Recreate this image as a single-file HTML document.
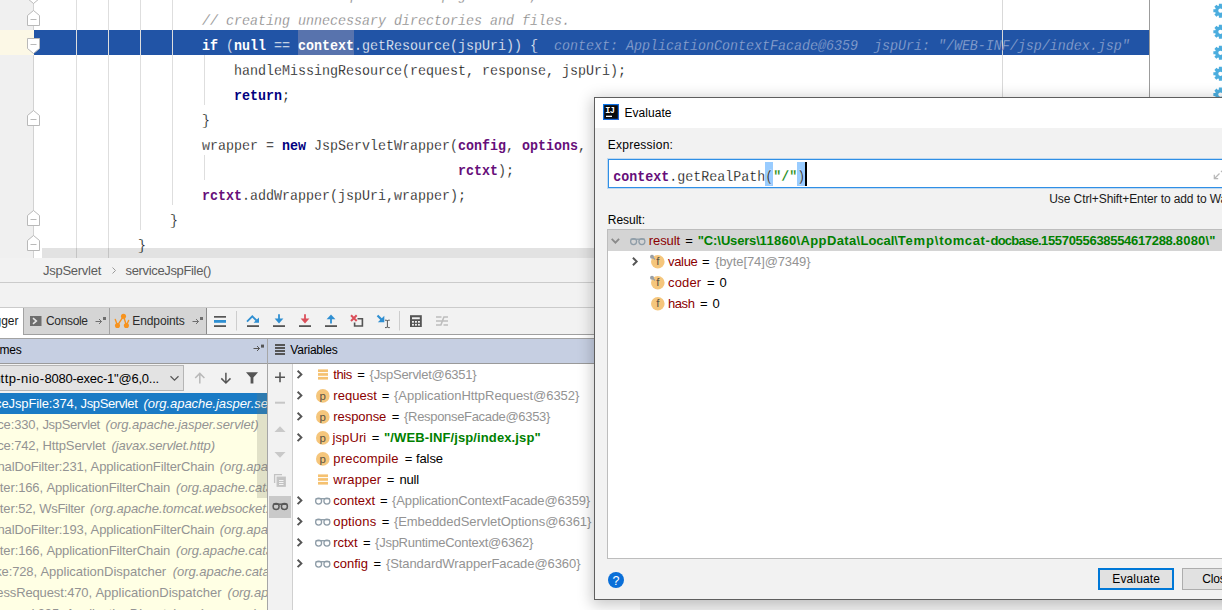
<!DOCTYPE html>
<html><head><meta charset="utf-8"><title>Evaluate</title>
<style>
html,body{margin:0;padding:0;}
body{width:1222px;height:610px;overflow:hidden;position:relative;background:#f2f2f2;font-family:"Liberation Sans",sans-serif;font-size:13px;color:#000;}
.abs{position:absolute;}
svg{position:absolute;overflow:visible;}
.t{position:absolute;white-space:pre;line-height:16px;height:16px;}
#editor{position:absolute;left:0;top:0;width:1150px;height:258px;background:#fff;overflow:hidden;}
#gutter{position:absolute;left:0;top:0;width:33px;height:258px;background:#f0f0f0;border-right:1px solid #d2d2d2;}
.ig{position:absolute;width:1px;background:#dedede;}
.cl{position:absolute;transform:scale(1,1.14);transform-origin:0 0;margin-top:2px;height:25px;line-height:25px;white-space:pre;font-family:"Liberation Mono",monospace;font-size:13.33px;color:#000;}
.cl{-webkit-text-stroke:0.22px #fff;}
.kw,.fld{-webkit-text-stroke:0 transparent;}
.hl{-webkit-text-stroke-color:#2154a6;}
.kw{color:#000080;font-weight:bold;}
.fld{color:#660e7a;font-weight:bold;}
.cm{color:#808080;font-style:italic;}
.u{text-decoration:underline;}
.hl .kw,.hl .fld{color:#fff;}.hl{color:#fbfcfe;}
.clip{position:absolute;overflow:hidden;}
</style></head><body>

<!-- ================= EDITOR ================= -->
<div id="editor">
  <div id="gutter"></div>
  <div class="abs" style="left:0;top:30px;width:34px;height:25px;background:#fcf8e6;"></div>
  <div class="abs" style="left:34px;top:30px;width:1115px;height:25px;background:#2154a6;"></div>
  <div class="abs" style="left:298px;top:30px;width:56px;height:25px;background:#5873ad;"></div>
  <div class="ig" style="left:76px;top:0;height:258px;"></div>
  <div class="ig" style="left:108px;top:0;height:258px;"></div>
  <div class="ig" style="left:140px;top:0;height:230px;"></div>
  <div class="ig" style="left:172px;top:0;height:205px;"></div>
  <div class="ig" style="left:204px;top:55px;height:50px;"></div>
  <div class="ig" style="left:204px;top:155px;height:25px;"></div>
  <div class="ig" style="left:1002px;top:0;height:258px;background:#d9d9d9;"></div>
  <div class="cl cm" style="left:202px;top:-20px;">// Check if the requested JSP page exists, to avoid</div>
  <div class="cl cm" style="left:202px;top:5px;">// creating unnecessary directories and files.</div>
  <div class="cl hl" style="left:202px;top:30px;"><span class="kw">if</span> (<span class="kw">null</span> == <span class="fld">context</span>.getResource(jspUri)) {  <span style="font-style:italic;color:#93a8d3;">context: ApplicationContextFacade@6359  jspUri: "/WEB-INF/jsp/index.jsp"</span></div>
  <div class="cl" style="left:234px;top:55px;">handleMissingResource(request, response, jspUri);</div>
  <div class="cl" style="left:234px;top:80px;"><span class="kw">return</span>;</div>
  <div class="cl" style="left:202px;top:105px;">}</div>
  <div class="cl" style="left:202px;top:130px;"><span class="u">wrapper</span> = <span class="kw">new</span> JspServletWrapper(<span class="fld">config</span>, <span class="fld">options</span>,</div>
  <div class="cl" style="left:458px;top:155px;"><span class="fld">rctxt</span>);</div>
  <div class="cl" style="left:202px;top:180px;"><span class="fld">rctxt</span>.addWrapper(jspUri,<span class="u">wrapper</span>);</div>
  <div class="cl" style="left:170px;top:205px;">}</div>
  <div class="cl" style="left:138px;top:230px;">}</div>
  <svg style="left:0;top:0;" width="60" height="258" fill="#fff" stroke="#b9b9b9" stroke-width="1"><path d="M27.5 -11.5H39.5V-1.5L33.5 3.5L27.5 -1.5Z"/><path d="M30.5 -5.5H36.5"/><path d="M27.5 15.5L33.5 10.5L39.5 15.5V25.5H27.5Z"/><path d="M30.5 19.5H36.5"/><path d="M27.5 38.5H39.5V48.5L33.5 53.5L27.5 48.5Z"/><path d="M30.5 44.5H36.5"/><path d="M27.5 115.5L33.5 110.5L39.5 115.5V125.5H27.5Z"/><path d="M30.5 119.5H36.5"/><path d="M27.5 215.5L33.5 210.5L39.5 215.5V225.5H27.5Z"/><path d="M30.5 219.5H36.5"/><path d="M27.5 240.5L33.5 235.5L39.5 240.5V250.5H27.5Z"/><path d="M30.5 244.5H36.5"/></svg>
  <div class="abs" style="left:42px;top:248px;width:1108px;height:10.5px;background:rgba(0,0,0,.115);"></div>
</div>
<div class="abs" style="left:1149px;top:0;width:1px;height:97px;background:#9c9c9c;"></div>
<div class="abs" style="left:1150px;top:0;width:72px;height:97px;background:#fff;"></div>
<svg style="left:0;top:0;" width="1222" height="98"><path d="M1227.44 9.20L1227.44 12.20L1225.46 12.27L1225.09 13.17L1226.44 14.62L1224.32 16.74L1222.87 15.39L1221.97 15.76L1221.90 17.74L1218.90 17.74L1218.83 15.76L1217.93 15.39L1216.48 16.74L1214.36 14.62L1215.71 13.17L1215.34 12.27L1213.36 12.20L1213.36 9.20L1215.34 9.13L1215.71 8.23L1214.36 6.78L1216.48 4.66L1217.93 6.01L1218.83 5.64L1218.90 3.66L1221.90 3.66L1221.97 5.64L1222.87 6.01L1224.32 4.66L1226.44 6.78L1225.09 8.23L1225.46 9.13Z" fill="#4badde"/><circle cx="1220.4" cy="10.7" r="2.1" fill="#fff"/><path d="M1227.44 30.30L1227.44 33.30L1225.46 33.37L1225.09 34.27L1226.44 35.72L1224.32 37.84L1222.87 36.49L1221.97 36.86L1221.90 38.84L1218.90 38.84L1218.83 36.86L1217.93 36.49L1216.48 37.84L1214.36 35.72L1215.71 34.27L1215.34 33.37L1213.36 33.30L1213.36 30.30L1215.34 30.23L1215.71 29.33L1214.36 27.88L1216.48 25.76L1217.93 27.11L1218.83 26.74L1218.90 24.76L1221.90 24.76L1221.97 26.74L1222.87 27.11L1224.32 25.76L1226.44 27.88L1225.09 29.33L1225.46 30.23Z" fill="#4badde"/><circle cx="1220.4" cy="31.8" r="2.1" fill="#fff"/><path d="M1227.44 51.30L1227.44 54.30L1225.46 54.37L1225.09 55.27L1226.44 56.72L1224.32 58.84L1222.87 57.49L1221.97 57.86L1221.90 59.84L1218.90 59.84L1218.83 57.86L1217.93 57.49L1216.48 58.84L1214.36 56.72L1215.71 55.27L1215.34 54.37L1213.36 54.30L1213.36 51.30L1215.34 51.23L1215.71 50.33L1214.36 48.88L1216.48 46.76L1217.93 48.11L1218.83 47.74L1218.90 45.76L1221.90 45.76L1221.97 47.74L1222.87 48.11L1224.32 46.76L1226.44 48.88L1225.09 50.33L1225.46 51.23Z" fill="#4badde"/><circle cx="1220.4" cy="52.8" r="2.1" fill="#fff"/><path d="M1227.44 72.30L1227.44 75.30L1225.46 75.37L1225.09 76.27L1226.44 77.72L1224.32 79.84L1222.87 78.49L1221.97 78.86L1221.90 80.84L1218.90 80.84L1218.83 78.86L1217.93 78.49L1216.48 79.84L1214.36 77.72L1215.71 76.27L1215.34 75.37L1213.36 75.30L1213.36 72.30L1215.34 72.23L1215.71 71.33L1214.36 69.88L1216.48 67.76L1217.93 69.11L1218.83 68.74L1218.90 66.76L1221.90 66.76L1221.97 68.74L1222.87 69.11L1224.32 67.76L1226.44 69.88L1225.09 71.33L1225.46 72.23Z" fill="#4badde"/><circle cx="1220.4" cy="73.8" r="2.1" fill="#fff"/><path d="M1227.44 93.10L1227.44 96.10L1225.46 96.17L1225.09 97.07L1226.44 98.52L1224.32 100.64L1222.87 99.29L1221.97 99.66L1221.90 101.64L1218.90 101.64L1218.83 99.66L1217.93 99.29L1216.48 100.64L1214.36 98.52L1215.71 97.07L1215.34 96.17L1213.36 96.10L1213.36 93.10L1215.34 93.03L1215.71 92.13L1214.36 90.68L1216.48 88.56L1217.93 89.91L1218.83 89.54L1218.90 87.56L1221.90 87.56L1221.97 89.54L1222.87 89.91L1224.32 88.56L1226.44 90.68L1225.09 92.13L1225.46 93.03Z" fill="#4badde"/><circle cx="1220.4" cy="94.6" r="2.1" fill="#fff"/></svg>
<!-- breadcrumbs -->
<div class="abs" style="left:0;top:258.5px;width:1222px;height:23.5px;background:#f2f2f2;border-bottom:1px solid #cbcbcb;"></div>
<svg style="left:0;top:0;" width="200" height="300"><path d="M112.5 267.5L115.5 270.5L112.5 273.5" fill="none" stroke="#9a9a9a" stroke-width="1"/></svg>

<!-- ================= DEBUG TOOLWINDOW ================= -->
<div class="abs" style="left:0;top:307px;width:640px;height:1px;background:#cbcbcb;"></div>
<div class="abs" style="left:0;top:308px;width:23px;height:27px;background:#fff;"></div>
<div class="abs" style="left:23px;top:308px;width:182px;height:26px;background:#d5d5d5;border-left:1px solid #a3a3a3;border-right:1px solid #8c8c8c;"></div>
<div class="abs" style="left:109px;top:308px;width:1px;height:26px;background:#a3a3a3;"></div>
<div class="abs" style="left:23px;top:334px;width:617px;height:1px;background:#a0a0a0;"></div>
<div class="abs" style="left:0;top:335px;width:640px;height:3px;background:#fff;"></div>
<svg style="left:0;top:0;" width="600" height="340">
  <rect x="30" y="316" width="11.5" height="10" fill="#6e6e6e"/>
  <path d="M33 318.2L36.3 321L33 323.8" fill="none" stroke="#e6e6e6" stroke-width="1.6"/>
  <g fill="none" stroke="#6e6e6e" stroke-width="1">
   <path d="M95.5 321.5H101.5M99 319L101.5 321.5L99 324"/>
   <path d="M192.5 321.5H198.5M196 319L198.5 321.5L196 324"/>
  </g>
  <rect x="103" y="317" width="3" height="3" fill="#6e6e6e"/>
  <rect x="200" y="317" width="3" height="3" fill="#6e6e6e"/>
  <g stroke="#f7931e" stroke-width="1.4" fill="none" stroke-linecap="round"><path d="M115.3 319.4L117.5 325.5L123.5 316.2L126.4 325.5L128.6 320.5"/></g>
  <circle cx="123.5" cy="316.2" r="2.55" fill="#f7931e"/><circle cx="117.5" cy="325.5" r="2.55" fill="#f7931e"/><circle cx="126.4" cy="325.5" r="2.55" fill="#f7931e"/>
  <rect x="214" y="316" width="12" height="1.7" fill="#555"/><rect x="214" y="320" width="12" height="2.8" fill="#2f8fd2"/><rect x="214" y="325.2" width="12" height="1.8" fill="#555"/>
  <rect x="236" y="311" width="1" height="19.5" fill="#cdcdcd"/>
  <rect x="399" y="311" width="1" height="19.5" fill="#cdcdcd"/>
  <rect x="247" y="325.2" width="12" height="1.8" fill="#555"/>
  <path d="M247 321.6L252.3 316.3L256.5 320.5" fill="none" stroke="#2f8fd2" stroke-width="1.8"/>
  <path d="M259 317.4V322.7H253.6Z" fill="#2f8fd2"/>
  <rect x="273" y="325.2" width="12" height="1.8" fill="#555"/>
  <path d="M279 314.2V320" stroke="#2f8fd2" stroke-width="1.8"/><path d="M274.6 318.6H283.4L279 323.4Z" fill="#2f8fd2"/>
  <rect x="299" y="325.2" width="12" height="1.8" fill="#555"/>
  <path d="M305 314.2V320" stroke="#db4f5a" stroke-width="1.8"/><path d="M300.6 318.6H309.4L305 323.4Z" fill="#db4f5a"/>
  <rect x="325" y="325.2" width="12" height="1.8" fill="#555"/>
  <path d="M331 323.4V318" stroke="#2f8fd2" stroke-width="1.8"/><path d="M326.6 319.2H335.4L331 314.4Z" fill="#2f8fd2"/>
  <path d="M351 315.3L356.7 321M356.7 315.3L351 321" stroke="#db4f5a" stroke-width="2"/>
  <path d="M357.5 318.8H362.4V326H354.6V322.4" fill="none" stroke="#555" stroke-width="1.6"/>
  <path d="M377.5 315.5L382.5 320.5" stroke="#2f8fd2" stroke-width="2.2"/><path d="M384.3 315.8V322.3H377.8Z" fill="#2f8fd2"/>
  <path d="M387.4 320.4V327.4M385 320.2H386.6L387.4 321L388.2 320.2H389.8M385 327.6H386.6L387.4 326.8L388.2 327.6H389.8" fill="none" stroke="#444" stroke-width="0.9"/>
  <rect x="410" y="315.2" width="11.8" height="11.8" fill="#555"/>
  <rect x="412" y="317.3" width="7.8" height="1.9" fill="#f2f2f2"/>
  <g fill="#f2f2f2"><rect x="412" y="321" width="1.9" height="1.7"/><rect x="415" y="321" width="1.9" height="1.7"/><rect x="418" y="321" width="1.9" height="1.7"/><rect x="412" y="323.9" width="1.9" height="1.7"/><rect x="415" y="323.9" width="1.9" height="1.7"/><rect x="418" y="323.9" width="1.9" height="1.7"/></g>
  <g stroke="#bdbdbd" stroke-width="1.6" fill="none"><path d="M436 317H441.5M443.5 317H448M436 321H448M436 325H441.5M443.5 325H448M440.8 325.3L444 316.8"/></g>
</svg>
<div class="abs" style="left:0;top:338px;width:640px;height:1px;background:#a2a2a2;"></div>
<div class="abs" style="left:0;top:339px;width:640px;height:24px;background:#c6cfe2;"></div>
<div class="abs" style="left:0;top:363px;width:640px;height:1px;background:#9a9a9a;"></div>

<div class="abs" style="left:0;top:364px;width:267px;height:29px;background:#f2f2f2;"></div>
<div class="abs" style="left:-2px;top:365px;width:184px;height:24px;background:#e3e3e3;border:1px solid #b5b5b5;"></div>
<div class="abs" style="left:0;top:393px;width:267px;height:217px;background:#ffffe4;"></div>
<div class="abs" style="left:0;top:393px;width:267px;height:21px;background:#1a7bc5;"></div>
<svg style="left:0;top:0;" width="600" height="610">
  <path d="M170.5 376.3L174.5 380.2L178.5 376.3" fill="none" stroke="#555" stroke-width="1.2"/>
  <g fill="none" stroke="#b9b9b9" stroke-width="1.5"><path d="M199.8 383.6V373.6M195.2 378L199.8 373.4L204.4 378"/></g>
  <g fill="none" stroke="#555" stroke-width="1.5"><path d="M225.9 372.8V382.8M221.3 378.4L225.9 383L230.5 378.4"/></g>
  <path d="M246 372.2H258L253.4 377.6V383.4H250.6V377.6Z" fill="#555"/>
  <path d="M253.5 348.5H259.5M257 346L259.5 348.5L257 351" fill="none" stroke="#555" stroke-width="1"/><rect x="261" y="344.6" width="3" height="3" fill="#555"/>
  <g fill="#555"><rect x="275" y="344" width="10" height="2"/><rect x="275" y="347" width="10" height="2"/><rect x="275" y="350" width="10" height="2"/><rect x="275" y="353" width="10" height="2"/></g>
</svg>

<div class="abs" style="left:268px;top:364px;width:24px;height:246px;background:#f2f2f2;border-right:1px solid #d0d0d0;"></div>
<div class="abs" style="left:293px;top:364px;width:347px;height:246px;background:#fff;"></div>
<div class="abs" style="left:269px;top:495.5px;width:22px;height:22px;background:#c9c9c9;"></div>
<svg style="left:0;top:0;" width="600" height="610"><path d="M297.6 370.7L301.40000000000003 374.4L297.6 378.09999999999997" fill="none" stroke="#555" stroke-width="1.9"/><rect x="318" y="369.4" width="10" height="2.7" fill="#f5c170"/><rect x="318" y="373.1" width="10" height="2.7" fill="#f5c170"/><rect x="318" y="376.9" width="10" height="2.7" fill="#f5c170"/><path d="M297.6 391.7L301.40000000000003 395.4L297.6 399.09999999999997" fill="none" stroke="#555" stroke-width="1.9"/><circle cx="322.8" cy="395.9" r="6.8" fill="#f5c67c"/><text x="322.8" y="399.5" text-anchor="middle" font-family="Liberation Sans,sans-serif" font-size="11.5" fill="#5a5244">p</text><path d="M297.6 412.7L301.40000000000003 416.4L297.6 420.09999999999997" fill="none" stroke="#555" stroke-width="1.9"/><circle cx="322.8" cy="416.9" r="6.8" fill="#f5c67c"/><text x="322.8" y="420.5" text-anchor="middle" font-family="Liberation Sans,sans-serif" font-size="11.5" fill="#5a5244">p</text><path d="M297.6 433.7L301.40000000000003 437.4L297.6 441.09999999999997" fill="none" stroke="#555" stroke-width="1.9"/><circle cx="322.8" cy="437.9" r="6.8" fill="#f5c67c"/><text x="322.8" y="441.5" text-anchor="middle" font-family="Liberation Sans,sans-serif" font-size="11.5" fill="#5a5244">p</text><circle cx="322.8" cy="458.9" r="6.8" fill="#f5c67c"/><text x="322.8" y="462.5" text-anchor="middle" font-family="Liberation Sans,sans-serif" font-size="11.5" fill="#5a5244">p</text><rect x="318" y="474.4" width="10" height="2.7" fill="#f5c170"/><rect x="318" y="478.1" width="10" height="2.7" fill="#f5c170"/><rect x="318" y="481.9" width="10" height="2.7" fill="#f5c170"/><path d="M297.6 496.7L301.40000000000003 500.4L297.6 504.09999999999997" fill="none" stroke="#555" stroke-width="1.9"/><g fill="none" stroke="#8f9da8" stroke-width="1.3"><circle cx="318.6" cy="501.1" r="3"/><circle cx="326.9" cy="501.1" r="3"/><path d="M315.6 498.7H329.9"/></g><path d="M297.6 517.6999999999999L301.40000000000003 521.4L297.6 525.1" fill="none" stroke="#555" stroke-width="1.9"/><g fill="none" stroke="#8f9da8" stroke-width="1.3"><circle cx="318.6" cy="522.1" r="3"/><circle cx="326.9" cy="522.1" r="3"/><path d="M315.6 519.7H329.9"/></g><path d="M297.6 538.6999999999999L301.40000000000003 542.4L297.6 546.1" fill="none" stroke="#555" stroke-width="1.9"/><g fill="none" stroke="#8f9da8" stroke-width="1.3"><circle cx="318.6" cy="543.1" r="3"/><circle cx="326.9" cy="543.1" r="3"/><path d="M315.6 540.7H329.9"/></g><path d="M297.6 559.6999999999999L301.40000000000003 563.4L297.6 567.1" fill="none" stroke="#555" stroke-width="1.9"/><g fill="none" stroke="#8f9da8" stroke-width="1.3"><circle cx="318.6" cy="564.1" r="3"/><circle cx="326.9" cy="564.1" r="3"/><path d="M315.6 561.7H329.9"/></g><path d="M275 377.2H285M280 372.2V382.2" stroke="#555" stroke-width="1.6"/><path d="M275 402.7H285" stroke="#c6c6c6" stroke-width="2"/><path d="M274.5 432L280 426.3L285.5 432Z" fill="#c9c9c9"/><path d="M274.5 452L280 457.7L285.5 452Z" fill="#c9c9c9"/><g fill="none" stroke="#c3c3c3" stroke-width="1.3"><path d="M274.6 483V474.6H282"/><rect x="277.2" y="477.2" width="8" height="9" fill="#c3c3c3"/></g><g stroke="#f2f2f2" stroke-width="1"><path d="M279 480.5H283.5M279 482.5H283.5M279 484.5H283.5"/></g><g fill="none" stroke="#585858" stroke-width="1.5"><circle cx="276.1" cy="506.6" r="3"/><circle cx="284.4" cy="506.6" r="3"/><path d="M273.1 504.2H287.4"/></g></svg><div class="t" style="left:43.00px;top:262.50px;font-size:13px;"><span style="letter-spacing:-0.270px;color:#5c5c5c;">JspServlet</span></div>
<div class="t" style="left:125.50px;top:262.50px;font-size:13px;"><span style="letter-spacing:-0.345px;color:#5c5c5c;">serviceJspFile()</span></div>
<div class="t" style="left:-33.59px;top:313.14px;font-size:12px;"><span style="letter-spacing:-0.150px;color:#1a1a1a;">Debu</span><span style="letter-spacing:-0.008px;color:#1a1a1a;">gger</span></div>
<div class="t" style="left:46.00px;top:313.14px;font-size:12px;"><span style="letter-spacing:-0.347px;color:#2b2b2b;">Console</span></div>
<div class="t" style="left:132.30px;top:313.14px;font-size:12px;"><span style="letter-spacing:-0.108px;color:#2b2b2b;">Endpoints</span></div>
<div class="t" style="left:-18.05px;top:342.14px;font-size:12px;"><span style="letter-spacing:-0.150px;color:#000;">Fra</span><span style="letter-spacing:-0.224px;color:#000;">mes</span></div>
<div class="t" style="left:290.30px;top:342.14px;font-size:12px;"><span style="letter-spacing:-0.216px;color:#000;">Variables</span></div>
<div class="t" style="left:-11.00px;top:370.50px;font-size:13px;"><span style="letter-spacing:-0.130px;color:#000;">&quot;h</span><span style="letter-spacing:0.429px;color:#000;">ttp-nio-</span><span style="letter-spacing:-0.242px;color:#000;">8080-exec-1&quot;@6,0...</span></div>
<div class="t" style="left:-31.69px;top:395.50px;font-size:13px;width:298.7px;overflow:hidden;"><span style="letter-spacing:-0.130px;color:#fff;">serviceJspFile:374, </span><span style="letter-spacing:-0.390px;color:#fff;">JspServlet</span><span style="letter-spacing:2.575px;color:#fff;"> </span><span style="letter-spacing:-0.047px;color:#fff;font-style:italic;">(org.apache.jasper.servlet)</span></div>
<div class="t" style="left:-29.61px;top:416.50px;font-size:13px;width:296.6px;overflow:hidden;"><span style="letter-spacing:-0.130px;color:#939393;">service:330, </span><span style="letter-spacing:-0.320px;color:#939393;">JspServlet</span><span style="letter-spacing:2.075px;color:#939393;"> </span><span style="letter-spacing:-0.047px;color:#939393;font-style:italic;">(org.apache.jasper.servlet)</span></div>
<div class="t" style="left:-29.61px;top:437.50px;font-size:13px;width:296.6px;overflow:hidden;"><span style="letter-spacing:-0.130px;color:#939393;">service:742, </span><span style="letter-spacing:-0.101px;color:#939393;">HttpServlet</span><span style="letter-spacing:2.375px;color:#939393;"> </span><span style="letter-spacing:-0.150px;color:#939393;font-style:italic;">(javax.servlet.http)</span></div>
<div class="t" style="left:-27.21px;top:458.50px;font-size:13px;width:294.2px;overflow:hidden;"><span style="letter-spacing:-0.130px;color:#939393;">internalDoFilter:231, </span><span style="letter-spacing:-0.125px;color:#939393;">ApplicationFilterChain</span><span style="letter-spacing:1.875px;color:#939393;"> </span><span style="letter-spacing:-0.050px;color:#939393;font-style:italic;">(org.apache.catalina.core)</span></div>
<div class="t" style="left:-27.66px;top:479.50px;font-size:13px;width:294.7px;overflow:hidden;"><span style="letter-spacing:-0.130px;color:#939393;">doFilter:166, </span><span style="letter-spacing:-0.125px;color:#939393;">ApplicationFilterChain</span><span style="letter-spacing:2.375px;color:#939393;"> </span><span style="letter-spacing:-0.050px;color:#939393;font-style:italic;">(org.apache.catalina.core)</span></div>
<div class="t" style="left:-27.67px;top:500.50px;font-size:13px;width:294.7px;overflow:hidden;"><span style="letter-spacing:-0.130px;color:#939393;">doFilter:52, </span><span style="letter-spacing:-0.321px;color:#939393;">WsFilter</span><span style="letter-spacing:2.075px;color:#939393;"> </span><span style="letter-spacing:-0.050px;color:#939393;font-style:italic;">(org.apache.tomcat.websocket.server)</span></div>
<div class="t" style="left:-27.21px;top:521.50px;font-size:13px;width:294.2px;overflow:hidden;"><span style="letter-spacing:-0.130px;color:#939393;">internalDoFilter:193, </span><span style="letter-spacing:-0.125px;color:#939393;">ApplicationFilterChain</span><span style="letter-spacing:1.875px;color:#939393;"> </span><span style="letter-spacing:-0.050px;color:#939393;font-style:italic;">(org.apache.catalina.core)</span></div>
<div class="t" style="left:-27.66px;top:542.50px;font-size:13px;width:294.7px;overflow:hidden;"><span style="letter-spacing:-0.130px;color:#939393;">doFilter:166, </span><span style="letter-spacing:-0.125px;color:#939393;">ApplicationFilterChain</span><span style="letter-spacing:2.375px;color:#939393;"> </span><span style="letter-spacing:-0.050px;color:#939393;font-style:italic;">(org.apache.catalina.core)</span></div>
<div class="t" style="left:-28.15px;top:563.50px;font-size:13px;width:295.1px;overflow:hidden;"><span style="letter-spacing:-0.130px;color:#939393;">invoke:728, </span><span style="letter-spacing:0.003px;color:#939393;">ApplicationDispatcher</span><span style="letter-spacing:2.975px;color:#939393;"> </span><span style="letter-spacing:-0.050px;color:#939393;font-style:italic;">(org.apache.catalina.core)</span></div>
<div class="t" style="left:-28.47px;top:584.50px;font-size:13px;width:295.5px;overflow:hidden;"><span style="letter-spacing:-0.130px;color:#939393;">processRequest:470, </span><span style="letter-spacing:0.022px;color:#939393;">ApplicationDispatcher</span><span style="letter-spacing:2.375px;color:#939393;"> </span><span style="letter-spacing:-0.050px;color:#939393;font-style:italic;">(org.apache.catalina.core)</span></div>
<div class="t" style="left:-26.72px;top:605.50px;font-size:13px;width:293.7px;overflow:hidden;"><span style="letter-spacing:-0.130px;color:#939393;">doForward:395, </span><span style="letter-spacing:0.013px;color:#939393;">ApplicationDispatcher</span><span style="letter-spacing:2.375px;color:#939393;"> </span><span style="letter-spacing:-0.050px;color:#939393;font-style:italic;">(org.apache.catalina.core)</span></div>
<div class="t" style="left:333.30px;top:366.60px;font-size:13px;"><span style="letter-spacing:-0.434px;color:#8b0000;">this</span><span style="letter-spacing:1.775px;color:#8b0000;"> </span><span style="letter-spacing:-0.394px;color:#000;">=</span><span style="letter-spacing:1.575px;color:#000;"> </span><span style="letter-spacing:-0.282px;color:#939393;">{JspServlet@6351}</span></div>
<div class="t" style="left:333.30px;top:387.60px;font-size:13px;"><span style="letter-spacing:0.018px;color:#8b0000;">request</span><span style="letter-spacing:1.275px;color:#8b0000;"> </span><span style="letter-spacing:-0.394px;color:#000;">=</span><span style="letter-spacing:1.575px;color:#000;"> </span><span style="letter-spacing:-0.051px;color:#939393;">{ApplicationHttpRequest@6352}</span></div>
<div class="t" style="left:333.30px;top:408.60px;font-size:13px;"><span style="letter-spacing:-0.061px;color:#8b0000;">response</span><span style="letter-spacing:1.775px;color:#8b0000;"> </span><span style="letter-spacing:-0.394px;color:#000;">=</span><span style="letter-spacing:1.575px;color:#000;"> </span><span style="letter-spacing:-0.324px;color:#939393;">{ResponseFacade@6353}</span></div>
<div class="t" style="left:332.50px;top:429.60px;font-size:13px;"><span style="letter-spacing:0.094px;color:#8b0000;">jspUri</span><span style="letter-spacing:1.775px;color:#8b0000;"> </span><span style="letter-spacing:-0.394px;color:#000;">=</span><span style="letter-spacing:1.575px;color:#000;"> </span><span style="letter-spacing:0.116px;color:#008000;font-weight:bold;">&quot;/WEB-INF/jsp/index.jsp&quot;</span></div>
<div class="t" style="left:333.30px;top:450.60px;font-size:13px;"><span style="letter-spacing:0.191px;color:#8b0000;">precompile</span><span style="letter-spacing:2.275px;color:#8b0000;"> </span><span style="letter-spacing:-0.394px;color:#000;">=</span><span style="letter-spacing:0.375px;color:#000;"> </span><span style="letter-spacing:-0.074px;color:#000;">false</span></div>
<div class="t" style="left:333.30px;top:471.60px;font-size:13px;"><span style="letter-spacing:0.147px;color:#8b0000;">wrapper</span><span style="letter-spacing:1.775px;color:#8b0000;"> </span><span style="letter-spacing:-0.394px;color:#000;">=</span><span style="letter-spacing:2.075px;color:#000;"> </span><span style="letter-spacing:-0.263px;color:#000;">null</span></div>
<div class="t" style="left:333.30px;top:492.60px;font-size:13px;"><span style="letter-spacing:-0.032px;color:#8b0000;">context</span><span style="letter-spacing:1.375px;color:#8b0000;"> </span><span style="letter-spacing:-0.394px;color:#000;">=</span><span style="letter-spacing:1.275px;color:#000;"> </span><span style="letter-spacing:-0.150px;color:#939393;">{ApplicationContextFacade@6359}</span></div>
<div class="t" style="left:333.30px;top:513.60px;font-size:13px;"><span style="letter-spacing:0.154px;color:#8b0000;">options</span><span style="letter-spacing:1.775px;color:#8b0000;"> </span><span style="letter-spacing:-0.394px;color:#000;">=</span><span style="letter-spacing:1.375px;color:#000;"> </span><span style="letter-spacing:-0.054px;color:#939393;">{EmbeddedServletOptions@6361}</span></div>
<div class="t" style="left:333.30px;top:534.60px;font-size:13px;"><span style="letter-spacing:-0.073px;color:#8b0000;">rctxt</span><span style="letter-spacing:1.875px;color:#8b0000;"> </span><span style="letter-spacing:-0.394px;color:#000;">=</span><span style="letter-spacing:1.275px;color:#000;"> </span><span style="letter-spacing:-0.265px;color:#939393;">{JspRuntimeContext@6362}</span></div>
<div class="t" style="left:333.30px;top:555.60px;font-size:13px;"><span style="letter-spacing:-0.001px;color:#8b0000;">config</span><span style="letter-spacing:1.875px;color:#8b0000;"> </span><span style="letter-spacing:-0.394px;color:#000;">=</span><span style="letter-spacing:1.575px;color:#000;"> </span><span style="letter-spacing:-0.070px;color:#939393;">{StandardWrapperFacade@6360}</span></div>
<div class="abs" style="left:257px;top:393px;width:10px;height:105px;background:rgba(120,120,100,.22);"></div>
<div class="abs" style="left:267px;top:339px;width:1px;height:271px;background:#a6a6a6;"></div>

<!-- ================= EVALUATE DIALOG ================= -->
<div class="abs" style="left:594px;top:97px;width:700px;height:501px;background:#f2f2f2;border:1px solid #5e5e5e;box-shadow:0 3px 14px 2px rgba(0,0,0,.22);"></div>
<div class="abs" style="left:595px;top:98px;width:627px;height:30px;background:#fff;"></div>
<svg style="left:0;top:0;" width="1222" height="610">
  <defs><linearGradient id="ijg" x1="0" y1="0" x2="1" y2="1"><stop offset="0" stop-color="#0a7bf0"/><stop offset="1" stop-color="#1f5fd0"/></linearGradient></defs>
  <rect x="603" y="104" width="16" height="16" fill="url(#ijg)"/>
  <rect x="604.2" y="105.2" width="13.6" height="13.6" fill="#0a0a0a"/>
  <rect x="606" y="115.7" width="6" height="1.3" fill="#fff"/>
  <text x="605.2" y="113" font-family="Liberation Mono,monospace" font-weight="bold" font-size="8.6" fill="#fff" letter-spacing="-0.5">IJ</text>
</svg>
<div class="abs" style="left:608px;top:159px;width:640px;height:27px;background:#fff;border:1px solid #2f8fe6;box-shadow:0 0 0 1px rgba(47,143,230,.25);"></div>
<div class="abs" style="left:765px;top:161.5px;width:8px;height:24px;background:#99ccff;"></div>
<div class="abs" style="left:797px;top:161.5px;width:7.5px;height:24px;background:#99ccff;"></div>
<div class="abs" style="left:804.5px;top:161.5px;width:2px;height:24px;background:#000;"></div>
<div class="cl" style="left:613.3px;top:161px;"><span class="fld">context</span>.getRealPath(<span style="color:#008000;font-weight:bold;">"/"</span>)</div>
<svg style="left:0;top:0;" width="1222" height="610"><g stroke="#b7b7b7" stroke-width="1.2" fill="none"><path d="M1219.5 173.5L1214.5 178.5M1214.3 174.8V178.7H1218.2"/><path d="M1221 172L1224 169"/></g></svg>
<div class="abs" style="left:607px;top:229px;width:640px;height:328px;background:#fff;border:1px solid #bdbdbd;"></div>
<div class="abs" style="left:608px;top:230px;width:620px;height:21px;background:#d4d4d4;"></div>
<svg style="left:0;top:0;" width="1222" height="610"><path d="M611.7 238.9L615.4 242.7L619.1 238.9" fill="none" stroke="#8a8a8a" stroke-width="1.8"/><g fill="none" stroke="#8f9da8" stroke-width="1.3"><circle cx="633.6" cy="241.6" r="3"/><circle cx="641.9" cy="241.6" r="3"/><path d="M630.6 239.2H644.9"/></g><path d="M632.9 257.8L636.6999999999999 261.5L632.9 265.2" fill="none" stroke="#555" stroke-width="1.9"/><circle cx="657.8" cy="261.8" r="6.8" fill="#f5c67c"/><text x="657.8" y="265.40000000000003" text-anchor="middle" font-family="Liberation Sans,sans-serif" font-size="11.5" fill="#5a5244">f</text><circle cx="652" cy="256.7" r="2" fill="#9aa0a6"/><path d="M652.5 257L655 259.5" stroke="#9aa0a6" stroke-width="1.2"/><circle cx="657.8" cy="282.8" r="6.8" fill="#f5c67c"/><text x="657.8" y="286.40000000000003" text-anchor="middle" font-family="Liberation Sans,sans-serif" font-size="11.5" fill="#5a5244">f</text><circle cx="652" cy="277.7" r="2" fill="#9aa0a6"/><path d="M652.5 278L655 280.5" stroke="#9aa0a6" stroke-width="1.2"/><circle cx="657.8" cy="303.8" r="6.8" fill="#f5c67c"/><text x="657.8" y="307.40000000000003" text-anchor="middle" font-family="Liberation Sans,sans-serif" font-size="11.5" fill="#5a5244">f</text><circle cx="616" cy="580" r="8" fill="#0a6fd8"/><text x="616" y="584.5" text-anchor="middle" font-family="Liberation Sans,sans-serif" font-size="12.5" fill="#fff">?</text></svg>
<div class="abs" style="left:1098px;top:568px;width:72px;height:18px;background:#e1e1e1;border:2px solid #0078d7;"></div>
<div class="abs" style="left:1182px;top:568px;width:60px;height:20px;background:#e1e1e1;border:1px solid #adadad;"></div>
<div class="t" style="left:624.50px;top:104.74px;font-size:12px;"><span style="letter-spacing:0.037px;color:#000;">Evaluate</span></div>
<div class="t" style="left:607.80px;top:136.84px;font-size:12px;"><span style="letter-spacing:0.245px;color:#000;">Expression:</span></div>
<div class="t" style="left:607.80px;top:212.14px;font-size:12px;"><span style="letter-spacing:-0.023px;color:#000;">Result:</span></div>
<div class="t" style="left:1049.30px;top:190.94px;font-size:12px;"><span style="letter-spacing:-0.097px;color:#1a1a1a;">Use Ctrl+Shift+Enter to add to </span><span style="letter-spacing:-0.150px;color:#1a1a1a;">Watches</span></div>
<div class="t" style="left:648.80px;top:232.70px;font-size:13px;"><span style="letter-spacing:-0.099px;color:#8b0000;">result</span><span style="letter-spacing:1.575px;color:#8b0000;"> </span><span style="letter-spacing:-0.394px;color:#000;">=</span><span style="letter-spacing:1.675px;color:#000;"> </span><span style="letter-spacing:-0.075px;color:#008000;font-weight:bold;">&quot;C:\</span><span style="letter-spacing:-0.175px;color:#008000;font-weight:bold;">Users\</span><span style="letter-spacing:0.309px;color:#008000;font-weight:bold;">11860\</span><span style="letter-spacing:0.380px;color:#008000;font-weight:bold;">AppData\</span><span style="letter-spacing:-0.080px;color:#008000;font-weight:bold;">Local\</span><span style="letter-spacing:0.834px;color:#008000;font-weight:bold;">Temp\</span><span style="letter-spacing:0.607px;color:#008000;font-weight:bold;">tomcat-</span><span style="letter-spacing:-0.720px;color:#008000;font-weight:bold;">docbase.</span><span style="letter-spacing:-0.309px;color:#008000;font-weight:bold;">1557055638554617288.</span><span style="letter-spacing:0.183px;color:#008000;font-weight:bold;">8080\&quot;</span></div>
<div class="t" style="left:668.00px;top:253.70px;font-size:13px;"><span style="letter-spacing:-0.316px;color:#8b0000;">value</span><span style="letter-spacing:0.775px;color:#8b0000;"> </span><span style="letter-spacing:-0.394px;color:#000;">=</span><span style="letter-spacing:2.275px;color:#000;"> </span><span style="letter-spacing:-0.104px;color:#939393;">{byte[74]@7349}</span></div>
<div class="t" style="left:668.00px;top:274.70px;font-size:13px;"><span style="letter-spacing:0.154px;color:#8b0000;">coder</span><span style="letter-spacing:1.975px;color:#8b0000;"> </span><span style="letter-spacing:-0.394px;color:#000;">=</span><span style="letter-spacing:1.775px;color:#000;"> </span><span style="letter-spacing:-0.434px;color:#000;">0</span></div>
<div class="t" style="left:668.00px;top:295.70px;font-size:13px;"><span style="letter-spacing:-0.426px;color:#8b0000;">hash</span><span style="letter-spacing:1.775px;color:#8b0000;"> </span><span style="letter-spacing:-0.394px;color:#000;">=</span><span style="letter-spacing:1.775px;color:#000;"> </span><span style="letter-spacing:-0.434px;color:#000;">0</span></div>
<div class="t" style="left:1112.30px;top:571.34px;font-size:12px;"><span style="letter-spacing:0.125px;color:#000;">Evaluate</span></div>
<div class="t" style="left:1202.20px;top:571.34px;font-size:12px;"><span style="letter-spacing:-0.150px;color:#000;">Close</span></div>
</body></html>
